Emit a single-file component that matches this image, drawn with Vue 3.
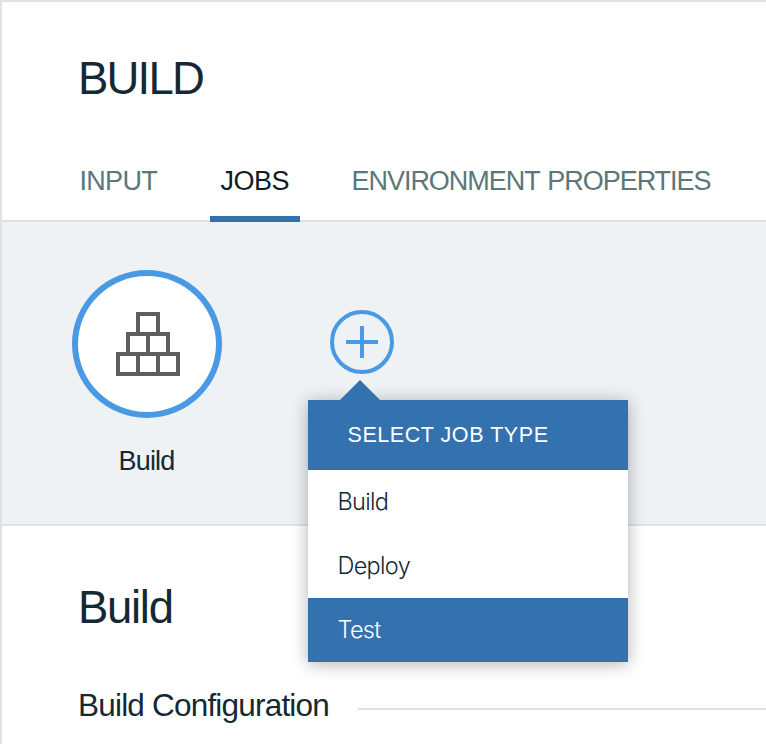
<script setup>
import { ref } from 'vue'

const tabs = [
  { id: 'input', label: 'INPUT' },
  { id: 'jobs', label: 'JOBS' },
  { id: 'env', label: 'ENVIRONMENT PROPERTIES' },
]
const activeTab = ref('jobs')

const jobTypes = ['Build', 'Deploy', 'Test']
const highlighted = ref('Test')
</script>

<template>
  <main class="stage">
    <header class="header">
      <h1 class="title">BUILD</h1>
      <nav class="tabs">
        <button
          v-for="tab in tabs"
          :key="tab.id"
          type="button"
          :class="['tab', `tab-${tab.id}`, { active: tab.id === activeTab }]"
          @click="activeTab = tab.id"
        >{{ tab.label }}</button>
      </nav>
    </header>

    <section class="jobs">
      <div class="job">
        <div class="job-circle">
          <svg class="job-icon" viewBox="0 0 64 64" width="64" height="64">
            <g fill="none" stroke="#5f5f5f" stroke-width="4">
              <rect x="22" y="2" width="20" height="20" />
              <rect x="12" y="22" width="20" height="20" />
              <rect x="32" y="22" width="20" height="20" />
              <rect x="2" y="42" width="20" height="20" />
              <rect x="22" y="42" width="20" height="20" />
              <rect x="42" y="42" width="20" height="20" />
            </g>
          </svg>
        </div>
        <span class="job-name">Build</span>
      </div>

      <div class="add">
        <svg class="add-icon" viewBox="0 0 64 64" width="64" height="64">
          <circle cx="32" cy="32" r="30" fill="none" stroke="#4a99e4" stroke-width="4" />
          <path d="M32 16V48M16 32H48" fill="none" stroke="#4a99e4" stroke-width="4" />
        </svg>
        <div class="menu">
          <svg class="menu-arrow" viewBox="0 0 40 20" width="40" height="20">
            <path d="M0 20L20 0L40 20Z" fill="#3371af" />
          </svg>
          <div class="menu-title">SELECT JOB TYPE</div>
          <ul class="menu-list">
            <li
              v-for="type in jobTypes"
              :key="type"
              :class="['menu-item', { selected: type === highlighted }]"
              @mouseenter="highlighted = type"
            >{{ type }}</li>
          </ul>
        </div>
      </div>
    </section>

    <section class="details">
      <h2 class="details-title">Build</h2>
      <div class="legend">
        <h3 class="legend-text">Build Configuration</h3>
        <span class="legend-line"></span>
      </div>
    </section>
  </main>
</template>

<style>
body {
  margin: 0;
  background: #fff;
  overflow: hidden;
}
</style>

<style scoped>
.stage {
  box-sizing: border-box;
  height: 744px;
  border-top: 2px solid #dee2e5;
  border-left: 2px solid #dee2e5;
  font-family: "Liberation Sans", Arial, sans-serif;
  color: #152935;
  overflow: hidden;
}
.header {
  box-sizing: border-box;
  height: 220px;
  padding: 47px 0 0 68px;
  border-bottom: 2px solid #dce2e6;
}
.title {
  margin: 0 0 52px 8px;
  font-size: 45.5px;
  line-height: 60px;
  font-weight: 400;
  letter-spacing: -1.8px;
}
.tabs {
  display: grid;
  grid-template-columns: 98px 90px auto;
  column-gap: 42px;
  justify-content: start;
}
.tab {
  height: 61px;
  padding: 0 0 15px 9.5px;
  border: 0;
  border-bottom: 6px solid transparent;
  background: none;
  font-family: inherit;
  font-size: 27px;
  line-height: 40px;
  text-align: left;
  white-space: nowrap;
  color: #5a7779;
  cursor: pointer;
}
.tab-input {
  letter-spacing: -0.7px;
}
.tab-jobs {
  padding-left: 10.5px;
  letter-spacing: -0.5px;
}
.tab-env {
  letter-spacing: -1.03px;
  word-spacing: 1.6px;
}
.tab.active {
  color: #121b26;
  border-bottom-color: #3371af;
}
.jobs {
  box-sizing: border-box;
  display: flex;
  align-items: flex-start;
  gap: 108px;
  height: 304px;
  padding: 48px 0 0 70px;
  background: #eef2f5;
  border-bottom: 2px solid #dce2e6;
}
.job {
  display: flex;
  flex-direction: column;
  align-items: center;
  width: 150px;
}
.job-circle {
  box-sizing: border-box;
  display: flex;
  align-items: center;
  justify-content: center;
  width: 150px;
  height: 148px;
  padding-left: 2px;
  border: 6px solid #4a99e4;
  border-radius: 50%;
  background: #fff;
}
.job-icon,
.add-icon,
.menu-arrow {
  display: block;
}
.job-name {
  margin: 23px 1px 0 0;
  font-size: 27px;
  line-height: 40px;
  letter-spacing: -0.85px;
}
.add {
  position: relative;
  width: 64px;
  margin-top: 40px;
}
.menu {
  position: absolute;
  top: 90px;
  left: -22px;
  width: 320px;
  background: #fff;
  box-shadow: 0 2px 16px rgba(0, 0, 0, 0.3);
}
.menu-arrow {
  position: absolute;
  top: -20px;
  left: 32px;
}
.menu-title {
  height: 70px;
  padding-left: 39.5px;
  background: #3371af;
  color: #fff;
  font-size: 21.5px;
  line-height: 71px;
  letter-spacing: 0.55px;
}
.menu-list {
  margin: 0;
  padding: 0;
  list-style: none;
}
.menu-item {
  height: 64px;
  padding-left: 29.5px;
  font-family: Inter, "Liberation Sans", sans-serif;
  font-weight: 300;
  font-size: 23.5px;
  line-height: 63px;
  letter-spacing: -0.7px;
}
.menu-item.selected {
  background: #3371af;
  color: #fff;
}
.details {
  padding: 52px 0 0 76px;
}
.details-title {
  margin: 0 0 52px;
  font-size: 45.5px;
  line-height: 60px;
  font-weight: 400;
  letter-spacing: -1.3px;
}
.legend {
  display: flex;
  align-items: center;
}
.legend-text {
  width: 280px;
  margin: 0;
  font-size: 31.5px;
  line-height: 30px;
  font-weight: 400;
  letter-spacing: -0.8px;
  white-space: nowrap;
}
.legend-line {
  flex: 1;
  height: 2px;
  margin-top: 8px;
  background: #dce2e6;
}
</style>
